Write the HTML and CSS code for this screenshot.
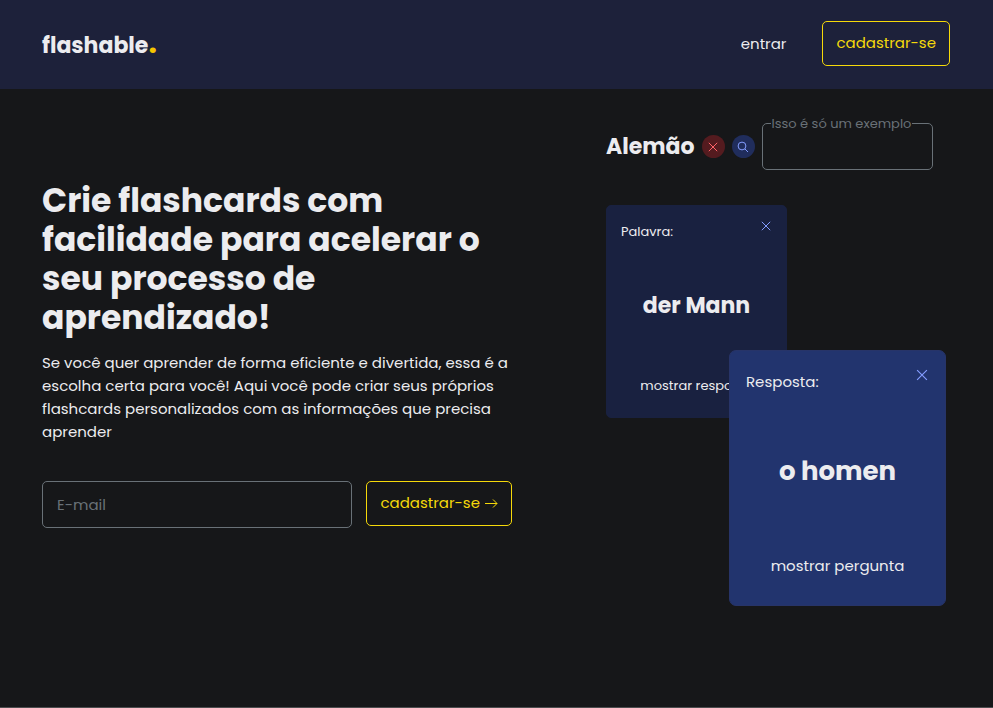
FILE: index.html
```html
<!DOCTYPE html>
<html lang="pt-BR">
<head>
<meta charset="utf-8">
<meta name="viewport" content="width=device-width, initial-scale=1">
<title>flashable.</title>
<link rel="stylesheet" href="styles.css">
</head>
<body>
<header class="header">
  <a class="logo" href="#">flashable<span class="logo-dot">.</span></a>
  <nav class="nav">
    <a class="nav-link" href="#">entrar</a>
    <a class="button" href="#">cadastrar-se</a>
  </nav>
</header>
<main class="main">
  <section class="hero">
    <h1 class="title">Crie flashcards com facilidade para acelerar o seu processo de aprendizado!</h1>
    <p class="lead">Se você quer aprender de forma eficiente e divertida, essa é a escolha certa para você! Aqui você pode criar seus próprios flashcards personalizados com as informações que precisa aprender</p>
    <form class="signup">
      <input class="email" type="email" placeholder="E-mail" aria-label="E-mail">
      <button class="button" type="submit">cadastrar-se
        <svg class="arrow" viewBox="0 0 14 14" aria-hidden="true"><path d="M1 7.500H13M9 3.500L13 7.500L9 11.500"/></svg>
      </button>
    </form>
  </section>
  <section class="demo">
    <div class="toolbar">
      <h2 class="deck">Alemão</h2>
      <button class="round round-red" type="button" aria-label="Excluir"><svg class="icon" viewBox="0 0 12 12" aria-hidden="true"><path d="M1.800 1.800L10.200 10.200M10.200 1.800L1.800 10.200"/></svg></button>
      <button class="round round-blue" type="button" aria-label="Buscar"><svg class="icon" viewBox="0 0 12 12" aria-hidden="true"><circle cx="5" cy="5" r="3.900"/><path d="M7.900 7.900L11 11"/></svg></button>
      <fieldset class="search">
        <legend class="legend"><label for="example">Isso é só um exemplo</label></legend>
        <input class="search-input" id="example" type="text">
      </fieldset>
    </div>
    <div class="cards">
      <article class="card">
        <div class="card-head"><span>Palavra:</span><button class="close" type="button" aria-label="Fechar"><svg class="icon" viewBox="0 0 12 12" aria-hidden="true"><path d="M1.800 1.800L10.200 10.200M10.200 1.800L1.800 10.200"/></svg></button></div>
        <strong class="word">der Mann</strong>
        <button class="flip" type="button">mostrar resposta</button>
      </article>
      <article class="card card-front">
        <div class="card-head"><span>Resposta:</span><button class="close" type="button" aria-label="Fechar"><svg class="icon" viewBox="0 0 12 12" aria-hidden="true"><path d="M1.800 1.800L10.200 10.200M10.200 1.800L1.800 10.200"/></svg></button></div>
        <strong class="word">o homen</strong>
        <button class="flip" type="button">mostrar pergunta</button>
      </article>
    </div>
  </section>
</main>
</body>
</html>
```

FILE: styles.css
```css
* { box-sizing: border-box; }

body {
  margin: 0;
  min-height: 100vh;
  display: flex;
  flex-direction: column;
  background: #161719;
  color: #ececef;
  font-family: Poppins, Inter, sans-serif;
  font-size: 15px;
  line-height: 23px;
}

button, input { font: inherit; color: inherit; }
button { cursor: pointer; }
a { color: inherit; text-decoration: none; }

.header {
  display: flex;
  align-items: center;
  justify-content: space-between;
  padding: 21px 43px 23px 42px;
  background: #1d213a;
}
.logo { font-size: 22px; font-weight: 700; }
.logo-dot { color: #f5c400; font-size: 30px; }
.nav { display: flex; align-items: center; gap: 36px; }

.button {
  display: inline-flex;
  align-items: center;
  gap: 4px;
  padding: 9px 13px 11px;
  border: 1px solid #f5d90a;
  border-radius: 5px;
  background: transparent;
  color: #f5d90a;
  white-space: nowrap;
}
.arrow { width: 14px; height: 14px; fill: none; stroke: currentColor; }

.main {
  flex: 1;
  display: grid;
  grid-template-columns: minmax(0, 470fr) minmax(0, 344fr);
  column-gap: 94px;
  align-items: start;
  padding: 34px 43px 34px 42px;
  border-bottom: 1px solid #4c4d4f;
}
.hero { padding-top: 58px; }
.title { margin: 0; font-size: 33px; line-height: 39px; font-weight: 700; }
.lead { margin: 14px 0 38px; }
.signup { display: flex; align-items: flex-start; gap: 14px; }
.email {
  flex: 1;
  min-width: 0;
  height: 47px;
  padding: 0 14px;
  border: 1px solid #697177;
  border-radius: 5px;
  background: transparent;
}
.email::placeholder { color: #697177; opacity: 1; }

.toolbar { display: flex; align-items: center; gap: 7px; }
.deck { margin: 0; font-size: 22px; line-height: 32px; font-weight: 700; }
.round {
  display: grid;
  place-items: center;
  flex: none;
  width: 23px;
  height: 23px;
  padding: 0;
  border: 0;
  border-radius: 50%;
}
.round-red { background: #541b1f; color: #ff6369; }
.round-blue { background: #202d5c; color: #849dff; }
.icon { display: block; width: 12px; height: 12px; fill: none; stroke: currentColor; }
.search {
  width: 171px;
  height: 54px;
  min-width: 0;
  margin: -7px 0 0;
  padding: 0 8px;
  border: 1px solid #697177;
  border-radius: 5px;
}
.legend { padding: 0 1px; color: #697177; font-size: 13px; line-height: 15px; white-space: nowrap; }
.search-input { display: block; width: 100%; height: 30px; padding: 0; border: 0; outline: 0; background: transparent; }

.cards { position: relative; margin-top: 35px; height: 401px; }
.card {
  display: flex;
  flex-direction: column;
  align-items: center;
  justify-content: space-between;
  width: 181px;
  height: 213px;
  padding: 14px;
  border: 1px solid #192140;
  border-radius: 5px;
  background: #192140;
  font-size: 13px;
}
.card-head { align-self: stretch; display: flex; justify-content: space-between; align-items: flex-start; }
.close { padding: 0; border: 0; background: none; color: #849dff; }
.word { margin-bottom: 7px; font-size: 22px; font-weight: 700; }
.flip { margin-bottom: 6px; padding: 0; border: 0; background: none; }
.card-front {
  position: absolute;
  top: 145px;
  left: 123px;
  width: 217px;
  height: 256px;
  padding: 17px 16px 19px;
  border-color: #273468;
  border-radius: 7px;
  background: #22346e;
  font-size: 15px;
  line-height: 28px;
}
.card-front .word { font-size: 26px; }
.card-front .icon { width: 14px; height: 14px; }
```
